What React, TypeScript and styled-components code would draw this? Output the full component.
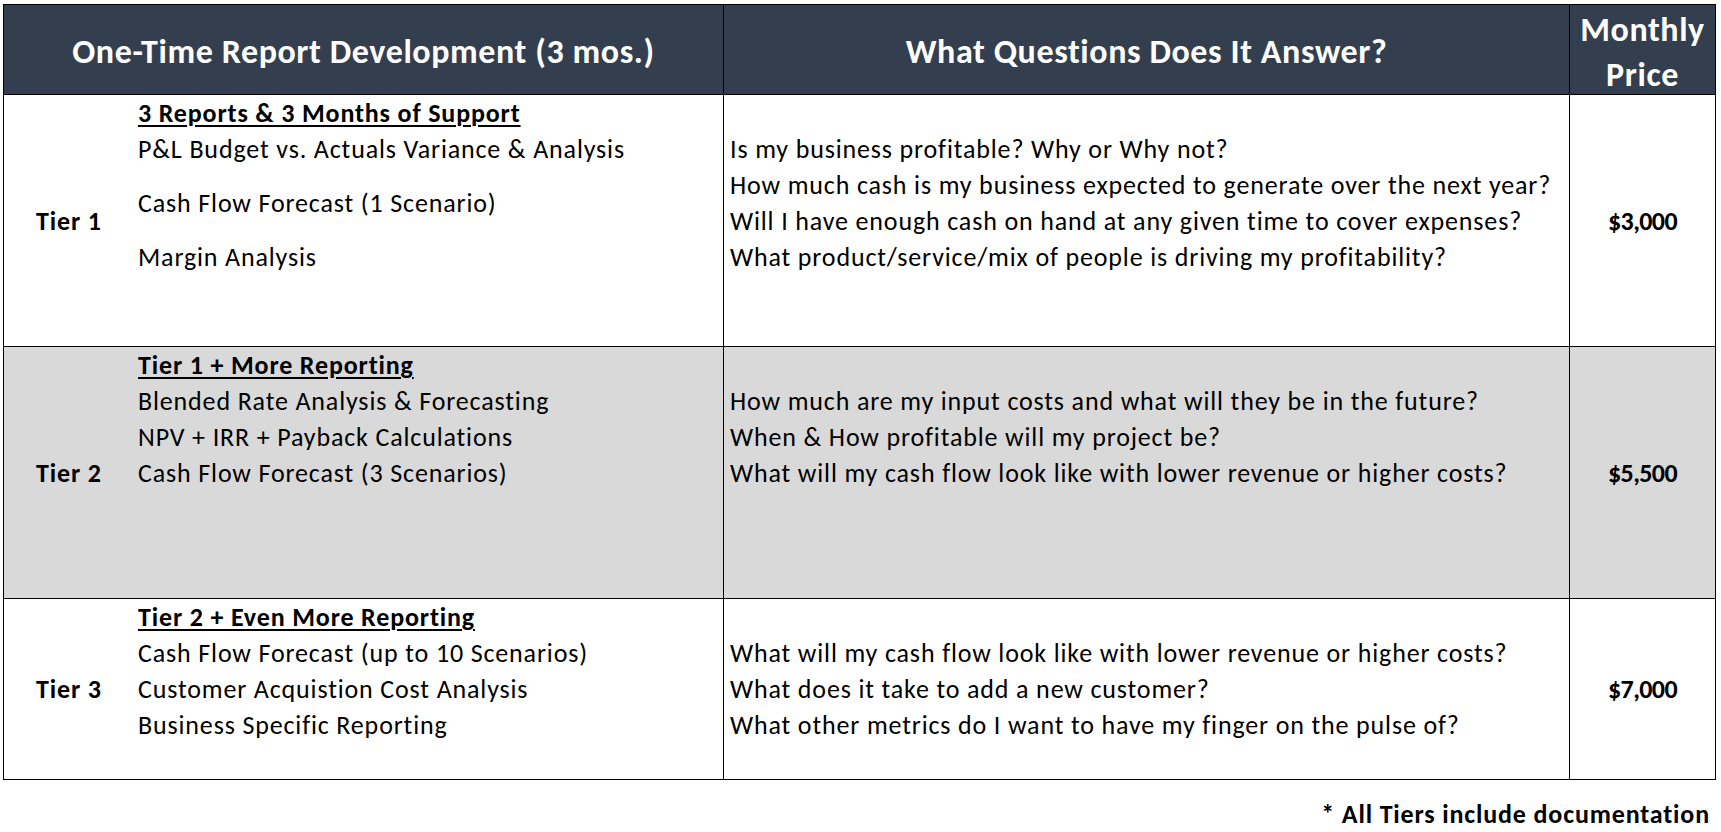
import styled, { createGlobalStyle } from "styled-components";

const GlobalStyle = createGlobalStyle`
  *, *::before, *::after {
    box-sizing: border-box;
  }
  html, body {
    margin: 0;
    padding: 0;
    background: #fff;
  }
  body {
    font-family: Carlito, Lato, "Liberation Sans", sans-serif;
    color: #000;
  }
`;

const Page = styled.div`
  padding: 4px 0 0 3px;
`;

const Frame = styled.div`
  display: inline-flex;
  flex-direction: column;
`;

const Sheet = styled.div`
  display: grid;
  grid-template-columns: 719px 845px 145px;
  grid-template-rows: 89px 251px 251px 180px;
  gap: 1px;
  padding: 1px;
  background: #000;
  width: max-content;
`;

const HeadCell = styled.div`
  background: #333f4f;
  color: #fff;
  font-size: 34px;
  letter-spacing: 0.6px;
  font-weight: 700;
  line-height: 45px;
  display: flex;
  align-items: center;
  justify-content: center;
  text-align: center;
  padding-top: 4px;
  white-space: nowrap;
`;

const Cell = styled.div<{ $shade?: boolean }>`
  background: ${(p) => (p.$shade ? "#d9d9d9" : "#fff")};
  font-size: 26px;
  letter-spacing: 0.85px;
  line-height: 36px;
  white-space: nowrap;
`;

const ReportCell = styled(Cell)`
  display: flex;
`;

const TierLabel = styled.div<{ $line: number }>`
  width: 134px;
  padding-left: 32px;
  padding-top: ${(p) => p.$line * 36}px;
  font-weight: 700;
`;

const ItemList = styled.div<{ $spaced?: boolean }>`
  display: flex;
  flex-direction: column;
  gap: ${(p) => (p.$spaced ? 18 : 0)}px;
`;

const Heading = styled.div`
  font-weight: 700;
  text-decoration: underline;
  text-decoration-thickness: 2px;
  text-underline-offset: 3px;
`;

const QuestionCell = styled(Cell)`
  padding: 36px 0 0 6px;
`;

const PriceCell = styled(Cell)<{ $line: number }>`
  padding-top: ${(p) => p.$line * 36}px;
  text-align: center;
  font-size: 26px;
  letter-spacing: -0.6px;
  font-weight: 700;
`;

const Footnote = styled.div`
  margin-top: 16px;
  padding-right: 6px;
  text-align: right;
  font-size: 26px;
  letter-spacing: 0.85px;
  line-height: 36px;
  font-weight: 700;
`;

type Tier = {
  label: string;
  heading: string;
  items: string[];
  spaced?: boolean;
  line: number;
  questions: string[];
  price: string;
  shade?: boolean;
};

const tiers: Tier[] = [
  {
    label: "Tier 1",
    heading: "3 Reports & 3 Months of Support",
    items: [
      "P&L Budget vs. Actuals Variance & Analysis",
      "Cash Flow Forecast (1 Scenario)",
      "Margin Analysis",
    ],
    spaced: true,
    line: 3,
    questions: [
      "Is my business profitable? Why or Why not?",
      "How much cash is my business expected to generate over the next year?",
      "Will I have enough cash on hand at any given time to cover expenses?",
      "What product/service/mix of people is driving my profitability?",
    ],
    price: "$3,000",
  },
  {
    label: "Tier 2",
    heading: "Tier 1 + More Reporting",
    items: [
      "Blended Rate Analysis & Forecasting",
      "NPV + IRR + Payback Calculations",
      "Cash Flow Forecast (3 Scenarios)",
    ],
    line: 3,
    questions: [
      "How much are my input costs and what will they be in the future?",
      "When & How profitable will my project be?",
      "What will my cash flow look like with lower revenue or higher costs?",
    ],
    price: "$5,500",
    shade: true,
  },
  {
    label: "Tier 3",
    heading: "Tier 2 + Even More Reporting",
    items: [
      "Cash Flow Forecast (up to 10 Scenarios)",
      "Customer Acquistion Cost Analysis",
      "Business Specific Reporting",
    ],
    line: 2,
    questions: [
      "What will my cash flow look like with lower revenue or higher costs?",
      "What does it take to add a new customer?",
      "What other metrics do I want to have my finger on the pulse of?",
    ],
    price: "$7,000",
  },
];

export default function App() {
  return (
    <Page>
      <GlobalStyle />
      <Frame>
        <Sheet>
          <HeadCell>One-Time Report Development (3 mos.)</HeadCell>
          <HeadCell>What Questions Does It Answer?</HeadCell>
          <HeadCell>
            Monthly
            <br />
            Price
          </HeadCell>
          {tiers.map((t) => [
            <ReportCell key={t.label + "-r"} $shade={t.shade}>
              <TierLabel $line={t.line}>{t.label}</TierLabel>
              <div>
                <Heading>{t.heading}</Heading>
                <ItemList $spaced={t.spaced}>
                  {t.items.map((item) => (
                    <div key={item}>{item}</div>
                  ))}
                </ItemList>
              </div>
            </ReportCell>,
            <QuestionCell key={t.label + "-q"} $shade={t.shade}>
              {t.questions.map((q, i) => (
                <div key={i}>{q}</div>
              ))}
            </QuestionCell>,
            <PriceCell key={t.label + "-p"} $shade={t.shade} $line={t.line}>
              {t.price}
            </PriceCell>,
          ])}
        </Sheet>
        <Footnote>* All Tiers include documentation</Footnote>
      </Frame>
    </Page>
  );
}
